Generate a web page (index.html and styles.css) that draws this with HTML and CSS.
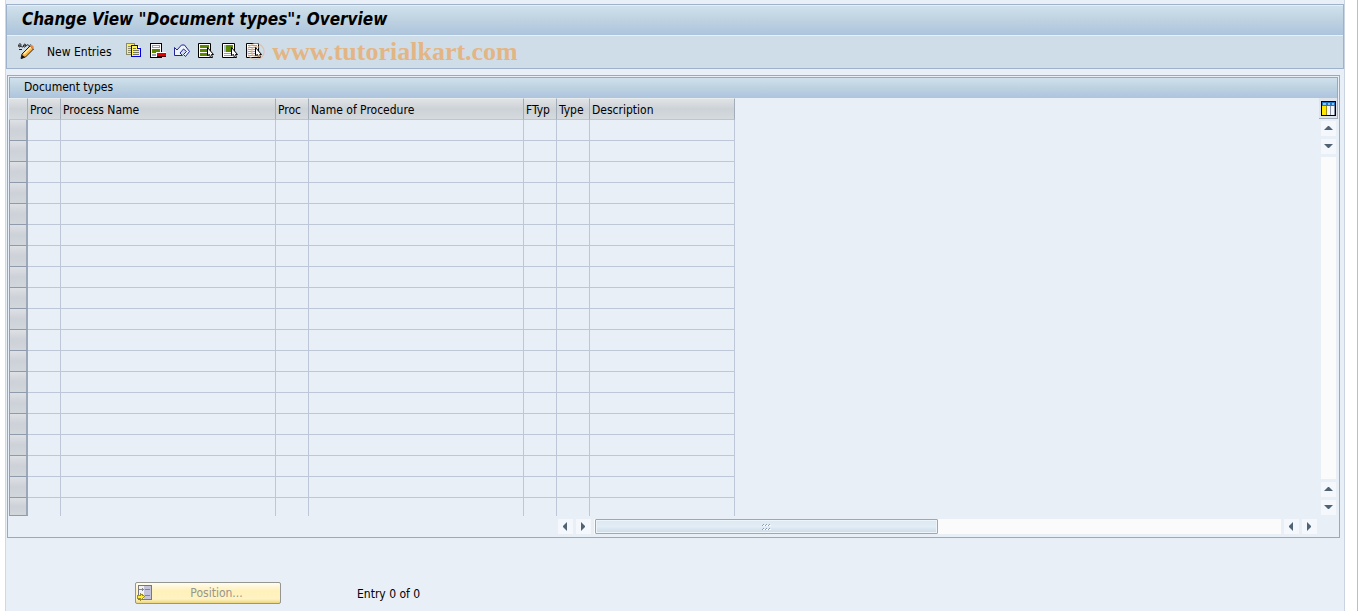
FILE: index.html
```html
<!DOCTYPE html>
<html lang="en">
<head>
    <meta charset="UTF-8">
    <meta name="viewport" content="width=device-width, initial-scale=1.0">
    <title>Change View "Document types": Overview</title>
    <link rel="stylesheet" href="styles.css">
</head>
<body>
    <div class="window">
        <header class="header">
            <h1>Change View "Document types": Overview</h1>
            <div class="toolbar">
                <button class="tool" aria-label="Display / Change">
                    <svg class="icon" viewBox="0 0 16 16">
                        <path d="M.5 3.500C.5 0 3 0 3 2S1 5 1 3s4 3 4.500 0S8 1 8 2.500 5.500 5 5.500 3 9 4 9.500 1.500M10 1.500c0 2 2 2 2.500 0M1 6.500h3" fill="none" stroke="#222"/>
                        <path d="M4 11l8-8 3.500 3-8 8L3 15.500z" fill="#ffb43c" stroke="#222"/>
                        <path d="M6 11l7-7" stroke="#fff3c8" stroke-width="1.500"/>
                        <path d="M12 3l1.500-1.500L16 4l-1.500 2z" fill="#e8873c"/>
                        <path d="M3 16l1-4 3 2z" fill="#111"/>
                    </svg>
                </button>
                <button class="tool tool-text">New Entries</button>
                <button class="tool" aria-label="Copy As">
                    <svg class="icon" viewBox="0 0 16 16" shape-rendering="crispEdges">
                        <path d="M.5.5h8v11h-8z" fill="#ffee58" stroke="#8c8c6a"/>
                        <path d="M2 3.500h5M2 5.500h5M2 7.500h5M2 9.500h5" stroke="#8c8c6a"/>
                        <path d="M5.500 2.500h6l3 3v8h-9z" fill="#fff45c" stroke="#0000e0"/>
                        <path d="M11.500 2.500v3h3" fill="#fff" stroke="#0000e0"/>
                        <path d="M7 5.500h3M7 7.500h6M7 9.500h6M7 11.500h6" stroke="#77775a"/>
                    </svg>
                </button>
                <button class="tool" aria-label="Delete">
                    <svg class="icon" viewBox="0 0 16 16" shape-rendering="crispEdges">
                        <path d="M.5.5h11v14H.5z" fill="#fff" stroke="#000"/>
                        <path d="M2.500 2.500h7v2h-7zM2.500 11.500h7v1h-7z" fill="#fff" stroke="#8fa3b8"/>
                        <path d="M2 6h8v4H2z" fill="#5c8700"/>
                        <path d="M6 9h10v4H6z" fill="#fff"/>
                        <path d="M7 10h9v3H7z" fill="#e00000"/>
                        <path d="M7 13h9v1H7z" fill="#400"/>
                    </svg>
                </button>
                <button class="tool" aria-label="Undo Change">
                    <svg class="icon" viewBox="0 0 16 16">
                        <path d="M.5 4.500v8h8L6 10l3.500-4 3 2.500-3 3 2 2 4-5-5-6.500h-3L3 7z" fill="#eef4fc" stroke="#22229a"/>
                    </svg>
                </button>
                <button class="tool" aria-label="Select All">
                    <svg class="icon" viewBox="0 0 16 16">
                        <path d="M.5.5h12v14H.5z" fill="#fff" stroke="#000"/>
                        <path d="M2 2h9v3H2zM2 6h9v3H2zM2 10h9v3H2z" fill="#5c8700"/>
                        <path d="M9.500 4.500v8l2-1 1 3h2l-1-3h2z" fill="#fff" stroke="#000"/>
                    </svg>
                </button>
                <button class="tool" aria-label="Select Block">
                    <svg class="icon" viewBox="0 0 16 16">
                        <path d="M.5.5h12v14H.5z" fill="#fff" stroke="#000"/>
                        <path d="M4 2h7v7H4z" fill="#5c8700"/>
                        <path d="M2 2h2v7H2z" fill="#a8bccc"/>
                        <path d="M2 10.500h8M2 12.500h8" stroke="#8fa3b8"/>
                        <path d="M9.500 4.500v8l2-1 1 3h2l-1-3h2z" fill="#fff" stroke="#000"/>
                    </svg>
                </button>
                <button class="tool" aria-label="Deselect All">
                    <svg class="icon" viewBox="0 0 16 16">
                        <path d="M.5.5h12v14H.5z" fill="#fff" stroke="#000"/>
                        <path d="M2 2.500h9M2 4.500h9M2 6.500h9M2 8.500h9M2 10.500h9M2 12.500h9" stroke="#8fa3b8"/>
                        <path d="M9.500 4.500v8l2-1 1 3h2l-1-3h2z" fill="#fff" stroke="#000"/>
                    </svg>
                </button>
                <div class="watermark"><span class="mark">©</span> www.tutorialkart.com</div>
            </div>
        </header>

        <main class="panel">
            <h2>Document types</h2>
            <div class="panel-body">
                <table class="grid">
                    <colgroup>
                        <col class="col-select">
                        <col class="col-key">
                        <col class="col-name">
                        <col class="col-key">
                        <col class="col-name">
                        <col class="col-key">
                        <col class="col-key">
                        <col class="col-desc">
                    </colgroup>
                    <thead>
                        <tr>
                            <th></th>
                            <th>Proc</th>
                            <th>Process Name</th>
                            <th>Proc</th>
                            <th>Name of Procedure</th>
                            <th>FTyp</th>
                            <th>Type</th>
                            <th>Description</th>
                        </tr>
                    </thead>
                    <tbody>
                        <tr><td></td><td></td><td></td><td></td><td></td><td></td><td></td><td></td></tr>
                        <tr><td></td><td></td><td></td><td></td><td></td><td></td><td></td><td></td></tr>
                        <tr><td></td><td></td><td></td><td></td><td></td><td></td><td></td><td></td></tr>
                        <tr><td></td><td></td><td></td><td></td><td></td><td></td><td></td><td></td></tr>
                        <tr><td></td><td></td><td></td><td></td><td></td><td></td><td></td><td></td></tr>
                        <tr><td></td><td></td><td></td><td></td><td></td><td></td><td></td><td></td></tr>
                        <tr><td></td><td></td><td></td><td></td><td></td><td></td><td></td><td></td></tr>
                        <tr><td></td><td></td><td></td><td></td><td></td><td></td><td></td><td></td></tr>
                        <tr><td></td><td></td><td></td><td></td><td></td><td></td><td></td><td></td></tr>
                        <tr><td></td><td></td><td></td><td></td><td></td><td></td><td></td><td></td></tr>
                        <tr><td></td><td></td><td></td><td></td><td></td><td></td><td></td><td></td></tr>
                        <tr><td></td><td></td><td></td><td></td><td></td><td></td><td></td><td></td></tr>
                        <tr><td></td><td></td><td></td><td></td><td></td><td></td><td></td><td></td></tr>
                        <tr><td></td><td></td><td></td><td></td><td></td><td></td><td></td><td></td></tr>
                        <tr><td></td><td></td><td></td><td></td><td></td><td></td><td></td><td></td></tr>
                        <tr><td></td><td></td><td></td><td></td><td></td><td></td><td></td><td></td></tr>
                        <tr><td></td><td></td><td></td><td></td><td></td><td></td><td></td><td></td></tr>
                        <tr><td></td><td></td><td></td><td></td><td></td><td></td><td></td><td></td></tr>
                        <tr><td></td><td></td><td></td><td></td><td></td><td></td><td></td><td></td></tr>
                    </tbody>
                </table>
                <div class="side">
                    <button class="config" aria-label="Table Settings">
                        <svg class="config-icon" viewBox="0 0 15 15" shape-rendering="crispEdges">
                            <path d="M0 0h15v15H0z" fill="#000"/>
                            <path d="M1 1h13v4H1z" fill="#2474c0"/>
                            <path d="M2 2h3v2H2zM7 2h2v2H7zM11 2h2v2h-2z" fill="#8cc0f0"/>
                            <path d="M1 5h4v9H1z" fill="#ffe800"/>
                            <path d="M5 5h1v9H5z" fill="#a08c00"/>
                            <path d="M6 5h3v9H6zM10 5h3v9h-3z" fill="#f4f6fa"/>
                            <path d="M9 5h1v9H9zM13 5h1v9h-1z" fill="#8890a0"/>
                        </svg>
                    </button>
                    <div class="vscroll">
                        <button class="arrow" aria-label="Scroll up"><svg viewBox="0 0 15 15"><path d="M3 9l4-4h1l4 4z"/></svg></button>
                        <button class="arrow" aria-label="Scroll down"><svg viewBox="0 0 15 15"><path d="M3 5l4 4h1l4-4z"/></svg></button>
                        <div class="track"></div>
                        <button class="arrow" aria-label="Page up"><svg viewBox="0 0 15 15"><path d="M3 9l4-4h1l4 4z"/></svg></button>
                        <button class="arrow" aria-label="Page down"><svg viewBox="0 0 15 15"><path d="M3 5l4 4h1l4-4z"/></svg></button>
                    </div>
                </div>
            </div>
            <div class="hscroll">
                <button class="arrow" aria-label="Scroll left"><svg viewBox="0 0 15 15"><path d="M9 3L5 7v1l4 4z"/></svg></button>
                <button class="arrow" aria-label="Scroll right"><svg viewBox="0 0 15 15"><path d="M5 3l4 4v1l-4 4z"/></svg></button>
                <div class="track">
                    <div class="thumb">
                        <svg class="grip" viewBox="0 0 9 6" shape-rendering="crispEdges">
                            <path d="M1 1h2v1H1zM4 1h2v1H4zM7 1h2v1H7zM1 5h2v1H1zM4 5h2v1H4zM7 5h2v1H7z" fill="#fff"/>
                            <path d="M0 1h1v1H0zM3 1h1v1H3zM6 1h1v1H6zM0 5h1v1H0zM3 5h1v1H3zM6 5h1v1H6zM1 0h1v1H1zM4 0h1v1H4zM7 0h1v1H7zM1 4h1v1H1zM4 4h1v1H4zM7 4h1v1H7z" fill="#8fa0b0"/>
                        </svg>
                    </div>
                </div>
                <button class="arrow" aria-label="Page left"><svg viewBox="0 0 15 15"><path d="M9 3L5 7v1l4 4z"/></svg></button>
                <button class="arrow" aria-label="Page right"><svg viewBox="0 0 15 15"><path d="M5 3l4 4v1l-4 4z"/></svg></button>
            </div>
        </main>

        <footer class="footer">
            <button class="position" disabled>
                <svg class="icon" viewBox="0 0 16 16" shape-rendering="crispEdges">
                    <path d="M1.500.5h13v14h-13z" fill="#f2f2f2" stroke="#77787c"/>
                    <path d="M7 1h7v13H7z" fill="#c3c3dc"/>
                    <path d="M2 4.500h5M5.500 3v3M8 4.500h5M8 10.500h5" stroke="#85868c"/>
                    <path d="M.5 10.500h3v-2l4 3-4 4v-2h-3z" fill="#ffee30" stroke="#9a8c30"/>
                </svg>
                <span>Position...</span>
            </button>
            <span class="entry">Entry 0 of 0</span>
        </footer>
    </div>
</body>
</html>
```

FILE: styles.css
```css
* {
    box-sizing: border-box;
}
body {
    margin: 0;
    padding: 0 12px 0 5px;
    min-height: 100vh;
    display: flex;
    background: #fff;
    border-right: 1px solid #b9bfc8;
    color: #000;
    font-family: "DejaVu Sans Condensed", "DejaVu Sans", sans-serif;
    font-size: 12px;
    line-height: 16px;
}
button {
    margin: 0;
    padding: 0;
    border: none;
    background: none;
    color: inherit;
    font: inherit;
}
svg {
    display: block;
}
.window {
    flex: 1;
    padding-top: 4px;
    background: #e8eff6;
    border-left: 1px solid #d0d8e4;
    border-right: 1px solid #c9d3e1;
}

/* title and toolbar */
.header {
    border: 1px solid #9eb2cc;
}
h1 {
    margin: 0;
    padding: 0 15px;
    height: 31px;
    line-height: 26px;
    font-size: 17px;
    font-style: italic;
    background: linear-gradient(#d0e1ed, #bfd3e1 45%, #adc4dd);
    border-top: 1px solid #e6eff8;
    border-bottom: 1px solid #e8f1f8;
}
.toolbar {
    position: relative;
    display: flex;
    align-items: center;
    gap: 8px;
    height: 32px;
    padding: 0 11px 2px;
    background: #cfdde8;
}
.icon {
    width: 16px;
    height: 16px;
}
.tool-text {
    padding: 0 6px 0 5px;
    margin-top: 2px;
}
.watermark {
    position: absolute;
    left: 239px;
    top: 0;
    line-height: 32px;
    font-family: "Liberation Serif", serif;
    font-size: 26px;
    font-weight: bold;
    color: #e4b584;
    white-space: nowrap;
    pointer-events: none;
}
.mark {
    opacity: 0.7;
    font-weight: normal;
}

/* table panel */
.panel {
    margin: 6px 4px 0 1px;
    padding: 1px 1px 3px;
    border: 1px solid #8fadc4;
}
h2 {
    margin: 0;
    padding: 0 14px;
    height: 21px;
    line-height: 18px;
    font-size: 12px;
    font-weight: normal;
    background: linear-gradient(#d0e1ed, #bfd3e1 45%, #adc4dd);
    border: 1px solid #93aac6;
    border-bottom: none;
}
.panel-body {
    display: flex;
    justify-content: space-between;
}
.grid {
    width: 726px;
    table-layout: fixed;
    border-collapse: separate;
    border-spacing: 0;
}
.col-select {
    width: 19px;
}
.col-key {
    width: 33px;
}
.col-name {
    width: 215px;
}
.col-desc {
    width: 145px;
}
.grid th {
    height: 22px;
    padding: 2px 0 0 2px;
    text-align: left;
    font-weight: normal;
    white-space: nowrap;
    background: linear-gradient(#e0e3e6, #cdd2d7 50%, #d5dade);
    border-top: 1px solid #e9ecef;
    border-right: 1px solid #a3acb9;
    border-bottom: 1px solid #bcc5d3;
}
.grid td {
    height: 21px;
    padding: 0;
    border-right: 1px solid #bec7d8;
    border-bottom: 1px solid #bec7d8;
}
.grid td:first-child {
    background: linear-gradient(#dde0e4, #cdd1d8 50%, #d2d7dc);
    border-left: 1px solid #93a0b2;
    border-right: 2px solid #9ca7b8;
    border-bottom-color: #8f9bad;
}
.grid tr:last-child td {
    height: 18px;
    border-bottom: none;
}
.grid tr:last-child td:first-child {
    border-bottom: 1px solid #8f9bad;
}

/* scrollbars */
.side {
    display: flex;
    flex-direction: column;
    align-items: center;
    gap: 2px;
}
.config {
    padding: 3px 1px 2px 2px;
    background: #dfe4ea;
    border-right: 1px solid #a3acb9;
    border-bottom: 1px solid #a3acb9;
}
.config-icon {
    width: 15px;
    height: 15px;
}
.vscroll {
    flex: 1;
    display: flex;
    flex-direction: column;
    gap: 3px;
    padding-bottom: 1px;
}
.hscroll {
    display: flex;
    gap: 3px;
    margin: 3px 21px 0 549px;
}
.arrow {
    width: 15px;
    height: 15px;
    background: #f4f7fb;
}
.arrow path {
    fill: #4f6375;
}
.track {
    flex: 1;
    background: #fbfbfb;
}
.hscroll .track {
    height: 15px;
    padding-left: 1px;
}
.thumb {
    display: flex;
    align-items: center;
    justify-content: center;
    width: 50%;
    height: 15px;
    background: linear-gradient(#dce9f3, #e2edf5 50%, #cbdbe7);
    border: 1px solid #9ba8b6;
    border-radius: 1px;
    box-shadow: inset 0 0 0 1px #eef5fa;
}
.grip {
    width: 9px;
    height: 6px;
}

/* footer */
.footer {
    display: flex;
    align-items: center;
    gap: 76px;
    padding: 44px 129px 0;
}
.position {
    display: flex;
    align-items: center;
    width: 146px;
    height: 22px;
    padding: 0 0 0 1px;
    color: #969690;
    background: linear-gradient(#fffdf0, #fff1b8 40%, #fff3c4 80%, #ecd67e);
    border: 1px solid #969690;
    border-radius: 2px;
}
.position span {
    flex: 1;
}
.entry {
    padding-top: 2px;
}
```
